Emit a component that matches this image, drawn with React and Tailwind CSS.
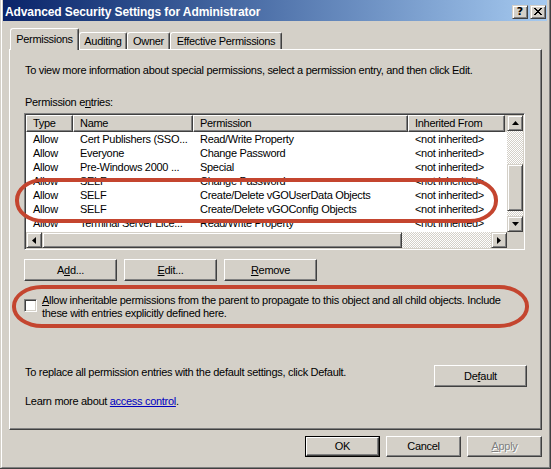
const raised =
  'border border-t-white border-l-white border-r-[#404040] border-b-[#404040] shadow-[inset_-1px_-1px_#808080] bg-[#d4d0c8]';
const sbBtn =
  'border border-t-[#d4d0c8] border-l-[#d4d0c8] border-r-[#404040] border-b-[#404040] shadow-[inset_1px_1px_#ffffff,inset_-1px_-1px_#808080] bg-[#d4d0c8]';
const dither = 'bg-[image:repeating-conic-gradient(#d4d0c8_0_25%,#ffffff_0_50%)] bg-[length:2px_2px]';

const rows = [
  ['Allow', 'Cert Publishers (SSO...', 'Read/Write Property', '<not inherited>'],
  ['Allow', 'Everyone', 'Change Password', '<not inherited>'],
  ['Allow', 'Pre-Windows 2000 ...', 'Special', '<not inherited>'],
  ['Allow', 'SELF', 'Change Password', '<not inherited>'],
  ['Allow', 'SELF', 'Create/Delete vGOUserData Objects', '<not inherited>'],
  ['Allow', 'SELF', 'Create/Delete vGOConfig Objects', '<not inherited>'],
  ['Allow', 'Terminal Server Lice...', 'Read/Write Property', '<not inherited>'],
  ['Allow', 'Windows Authorizati...', 'Read Property', '<not inherited>'],
];

const cols = ['w-[47px]', 'w-[120px]', 'w-[215px]', 'w-[97px]'];
const headers = ['Type', 'Name', 'Permission', 'Inherited From'];

function Arrow({ dir }) {
  const pts = {
    up: '3.5,0 7,4 0,4',
    down: '0,0 7,0 3.5,4',
    left: '4,0 4,7 0,3.5',
    right: '0,0 4,3.5 0,7',
  }[dir];
  const vert = dir === 'up' || dir === 'down';
  return (
    <svg width={vert ? 7 : 4} height={vert ? 4 : 7} viewBox={vert ? '0 0 7 4' : '0 0 4 7'}>
      <polygon points={pts} fill="#000" />
    </svg>
  );
}

function Button({ children, className = '', disabled }) {
  return (
    <div
      className={`flex items-center justify-center ${raised} ${className} ${
        disabled ? 'text-[#808080] [text-shadow:1px_1px_#ffffff]' : ''
      }`}
    >
      {children}
    </div>
  );
}

export default function App() {
  return (
    <div className="relative w-[551px] h-[469px] overflow-hidden bg-[#d4d0c8] pl-px border-b border-r border-b-[#404040] border-r-[#404040] text-black text-[11px] leading-[13px] tracking-[-0.3px] font-['Liberation_Sans',Arial,sans-serif]">
      <div className="h-full flex flex-col border-l border-l-white border-r border-r-[#808080] border-b border-b-[#808080]">
        {/* title bar */}
        <div className="ml-px mr-[2px] h-[21px] flex items-center pl-[2px] pr-px bg-linear-to-r from-[#0a246a] to-[#a6caf0]">
          <span className="text-white font-bold text-[12px] tracking-[-0.1px] pt-[3px]">
            Advanced Security Settings for Administrator
          </span>
          <div className="ml-auto flex gap-[2px] pt-[2px]">
            <div className={`w-[16px] h-[14px] flex items-center justify-center ${sbBtn}`}>
              <span className="font-bold text-[11px] leading-none tracking-normal font-['DejaVu_Sans',sans-serif]">?</span>
            </div>
            <div className={`w-[16px] h-[14px] flex items-center justify-center ${sbBtn}`}>
              <svg width="8" height="7" viewBox="0 0 8 7">
                <path d="M0 0h2v1h1v1h2V1h1V0h2v1H7v1H6v1H5v1h1v1h1v1h1v1H6V6H5V5H3v1H2v1H0V6h1V5h1V4h1V3H2V2H1V1H0z" fill="#000" />
              </svg>
            </div>
          </div>
        </div>

        {/* tabs */}
        <div className="relative z-10 mt-[7px] h-[21px] ml-[8px] flex items-end">
          <div className="h-[22px] -mb-px w-[69px] flex items-center justify-center bg-[#d4d0c8] border-l border-t border-r border-l-white border-t-white border-r-[#404040] rounded-tl-[3px] rounded-tr-[2px] shadow-[inset_-1px_0_#808080]">
            Permissions
          </div>
          <div className="h-[17px] w-[48px] flex items-center justify-center border-l border-t border-r border-l-white border-t-white border-r-[#404040] rounded-tl-[3px] rounded-tr-[2px] shadow-[inset_-1px_0_#808080]">
            Auditing
          </div>
          <div className="h-[17px] w-[43px] flex items-center justify-center border-l border-t border-r border-l-white border-t-white border-r-[#404040] rounded-tl-[3px] rounded-tr-[2px] shadow-[inset_-1px_0_#808080]">
            Owner
          </div>
          <div className="h-[17px] w-[112px] flex items-center justify-center border-l border-t border-r border-l-white border-t-white border-r-[#404040] rounded-tl-[3px] rounded-tr-[2px] shadow-[inset_-1px_0_#808080]">
            Effective Permissions
          </div>
        </div>

        {/* tab page */}
        <div className="ml-[7px] w-[533px] h-[381px] border border-l-white border-t-white border-r-[#404040] border-b-[#404040] shadow-[inset_-1px_-1px_#808080] px-[14px] pt-[14px] flex flex-col">
          <p className="pl-px whitespace-nowrap">
            To view more information about special permissions, select a permission entry, and then click Edit.
          </p>
          <p className="pl-px mt-[19px]">
            Permission e<u>n</u>tries:
          </p>

          {/* list view */}
          <div className="mt-[4px] w-[501px] h-[137px] border border-t-[#808080] border-l-[#808080] border-r-white border-b-white shadow-[inset_1px_1px_#404040,inset_-1px_-1px_#d4d0c8] p-px flex">
            <div className="w-[481px] flex flex-col">
              <div className="h-[17px] flex bg-[#d4d0c8]">
                {headers.map((h, i) => (
                  <div key={h} className={`${cols[i]} h-full flex items-center pl-[6px] ${raised}`}>
                    {h}
                  </div>
                ))}
              </div>
              <div className="flex-1 bg-white overflow-hidden">
                {rows.map((r, ri) => (
                  <div key={ri} className="h-[14px] flex items-center whitespace-nowrap">
                    {r.map((c, ci) => (
                      <div key={ci} className={`${cols[ci]} pl-[7px] overflow-hidden`}>
                        {c}
                      </div>
                    ))}
                  </div>
                ))}
              </div>
              <div className="h-[16px] flex">
                <div className={`w-[16px] h-full flex items-center justify-center ${sbBtn}`}>
                  <Arrow dir="left" />
                </div>
                <div className={`w-[360px] h-full ${sbBtn}`} />
                <div className={`flex-1 h-full ${dither}`} />
                <div className={`w-[16px] h-full flex items-center justify-center ${sbBtn}`}>
                  <Arrow dir="right" />
                </div>
              </div>
            </div>
            <div className="w-[16px] flex flex-col">
              <div className={`h-[16px] flex items-center justify-center ${sbBtn}`}>
                <Arrow dir="up" />
              </div>
              <div className={`h-[33px] ${dither}`} />
              <div className={`h-[47px] ${sbBtn}`} />
              <div className={`flex-1 ${dither}`} />
              <div className={`h-[16px] flex items-center justify-center ${sbBtn}`}>
                <Arrow dir="down" />
              </div>
              <div className="h-[16px] bg-[#d4d0c8]" />
            </div>
          </div>

          {/* buttons */}
          <div className="mt-[9px] flex gap-[7px]">
            <Button className="w-[93px] h-[22px]">
              A<u>d</u>d...
            </Button>
            <Button className="w-[93px] h-[22px]">
              <u>E</u>dit...
            </Button>
            <Button className="w-[93px] h-[22px]">
              <u>R</u>emove
            </Button>
          </div>

          {/* checkbox */}
          <div className="mt-[13px] flex items-start">
            <div className="mt-[5px] w-[13px] h-[13px] bg-white border border-t-[#808080] border-l-[#808080] border-r-white border-b-white shadow-[inset_1px_1px_#404040,inset_-1px_-1px_#d4d0c8]" />
            <p className="ml-[5px] whitespace-nowrap">
              <u>A</u>llow inheritable permissions from the parent to propagate to this object and all child objects. Include
              <br />
              these with entries explicitly defined here.
            </p>
          </div>

          <div className="mt-[45px] flex items-start justify-between">
            <p className="pl-px mt-px">To replace all permission entries with the default settings, click Default.</p>
            <Button className="w-[93px] h-[22px]">
              De<u>f</u>ault
            </Button>
          </div>

          <p className="pl-px mt-[8px]">
            Learn more about <span className="text-[#0000c0] underline">access control</span>.
          </p>
        </div>

        {/* dialog buttons */}
        <div className="mt-[6px] pr-[7px] flex justify-end gap-[6px]">
          <div className="w-[75px] h-[21px] border border-black">
            <Button className="w-full h-full">OK</Button>
          </div>
          <Button className="w-[75px] h-[21px]">Cancel</Button>
          <Button className="w-[75px] h-[21px]" disabled>
            <u>A</u>pply
          </Button>
        </div>
      </div>

      {/* annotation ellipses */}
      <div className="absolute left-[15px] top-[178px] w-[483px] h-[45px] border-4 border-[#c4452f] rounded-[28px/22px]" />
      <div className="absolute left-[12px] top-[285px] w-[517px] h-[43px] border-4 border-[#c4452f] rounded-[30px/21px]" />
    </div>
  );
}
